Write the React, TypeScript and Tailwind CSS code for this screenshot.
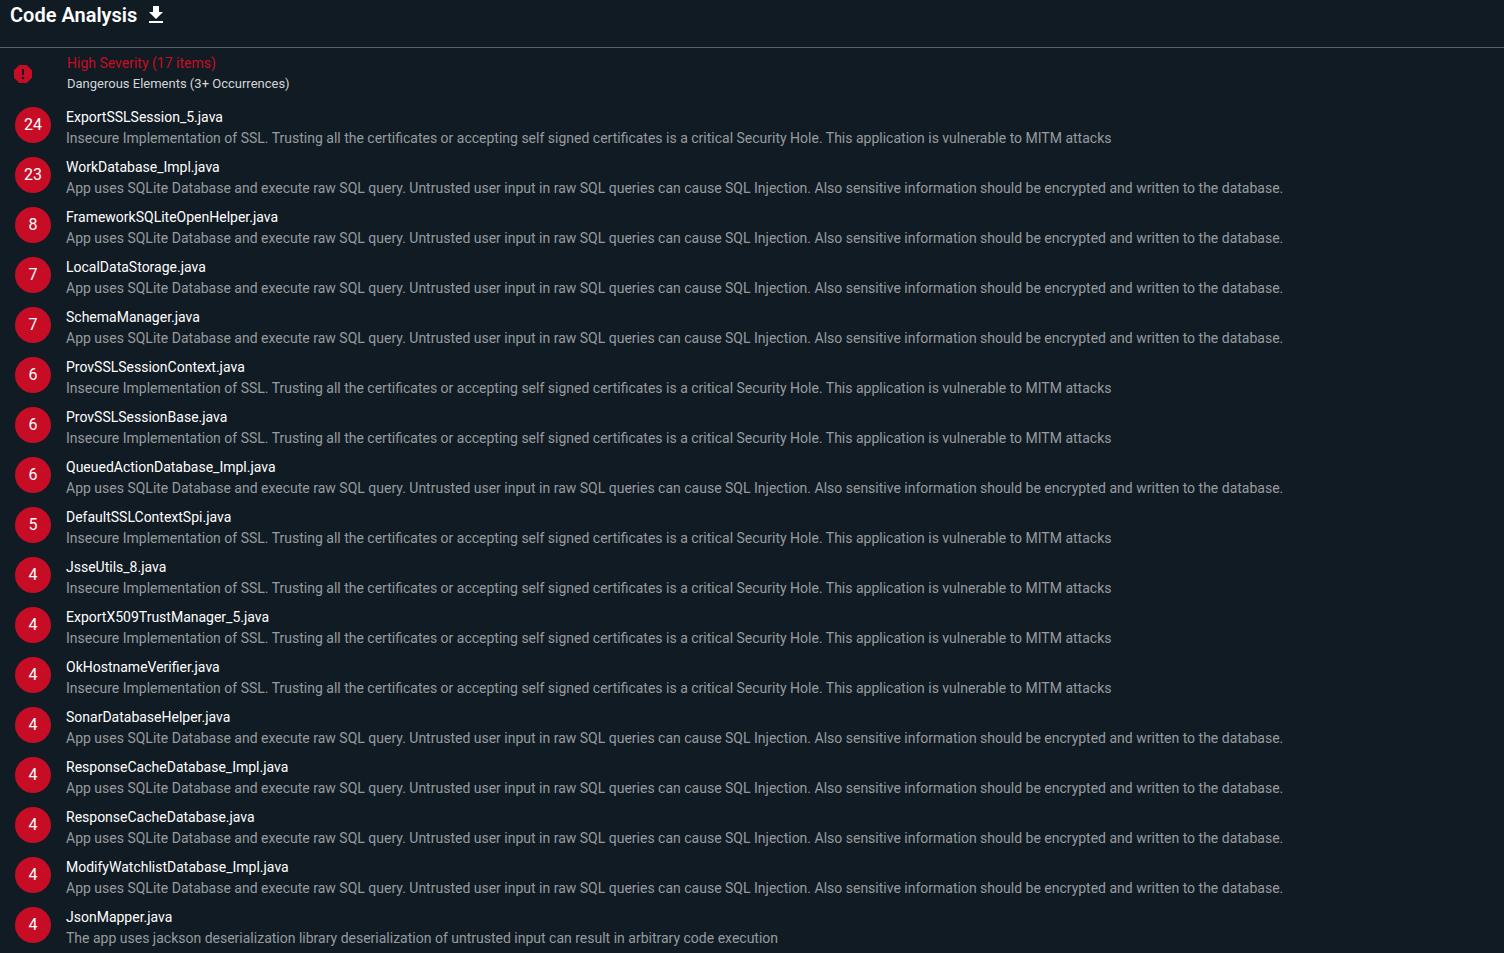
import { MdGetApp, MdReport } from "react-icons/md";

const SSL =
  "Insecure Implementation of SSL. Trusting all the certificates or accepting self signed certificates is a critical Security Hole. This application is vulnerable to MITM attacks";
const SQL =
  "App uses SQLite Database and execute raw SQL query. Untrusted user input in raw SQL queries can cause SQL Injection. Also sensitive information should be encrypted and written to the database.";
const JACKSON =
  "The app uses jackson deserialization library deserialization of untrusted input can result in arbitrary code execution";

interface Finding {
  count: number;
  file: string;
  description: string;
}

const findings: Finding[] = [
  { count: 24, file: "ExportSSLSession_5.java", description: SSL },
  { count: 23, file: "WorkDatabase_Impl.java", description: SQL },
  { count: 8, file: "FrameworkSQLiteOpenHelper.java", description: SQL },
  { count: 7, file: "LocalDataStorage.java", description: SQL },
  { count: 7, file: "SchemaManager.java", description: SQL },
  { count: 6, file: "ProvSSLSessionContext.java", description: SSL },
  { count: 6, file: "ProvSSLSessionBase.java", description: SSL },
  { count: 6, file: "QueuedActionDatabase_Impl.java", description: SQL },
  { count: 5, file: "DefaultSSLContextSpi.java", description: SSL },
  { count: 4, file: "JsseUtils_8.java", description: SSL },
  { count: 4, file: "ExportX509TrustManager_5.java", description: SSL },
  { count: 4, file: "OkHostnameVerifier.java", description: SSL },
  { count: 4, file: "SonarDatabaseHelper.java", description: SQL },
  { count: 4, file: "ResponseCacheDatabase_Impl.java", description: SQL },
  { count: 4, file: "ResponseCacheDatabase.java", description: SQL },
  { count: 4, file: "ModifyWatchlistDatabase_Impl.java", description: SQL },
  { count: 4, file: "JsonMapper.java", description: JACKSON },
];

function FindingRow({ count, file, description }: Finding) {
  return (
    <li className="flex items-start gap-[15px]">
      <span className="flex size-9 shrink-0 items-center justify-center rounded-full bg-[#c70d25] text-base text-white">
        {count}
      </span>
      <div className="min-w-0 text-sm leading-[21px]">
        <h3 className="text-white">{file}</h3>
        <p className="text-[#979b9f]">{description}</p>
      </div>
    </li>
  );
}

export default function App() {
  return (
    <main className="min-h-screen bg-[#111b24] font-['Roboto',sans-serif]">
      <header className="flex h-12 items-start gap-[7px] border-b border-[#556067] px-2.5">
        <h1 className="text-xl leading-[30px] font-semibold text-white">Code Analysis</h1>
        <button type="button" aria-label="Download code analysis" className="pt-[3px] text-white">
          <MdGetApp size={24} />
        </button>
      </header>

      <section>
        <div className="flex items-center gap-8 px-[11px] pt-[5px]">
          <MdReport size={24} className="shrink-0 text-[#c70d25]" />
          <div>
            <h2 className="text-sm leading-[21px] text-[#c70d25]">High Severity (17 items)</h2>
            <p className="text-[13px] leading-5 text-[#d3d6d8]">Dangerous Elements (3+ Occurrences)</p>
          </div>
        </div>
        <ul className="flex flex-col gap-2 px-[15px] pt-[13px]">
          {findings.map((finding) => (
            <FindingRow key={finding.file} {...finding} />
          ))}
        </ul>
      </section>
    </main>
  );
}
